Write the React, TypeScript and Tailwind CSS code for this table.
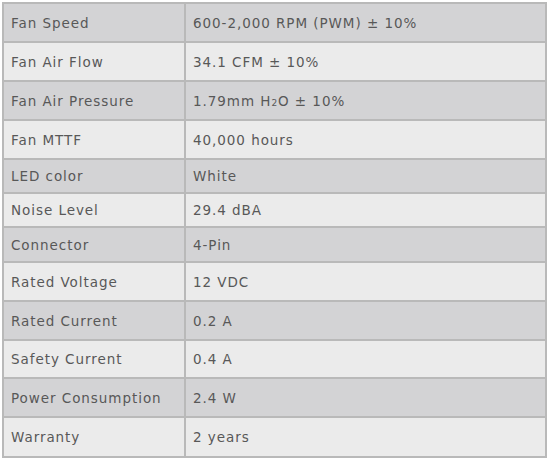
import React from 'react'

const specs: { label: string; value: React.ReactNode; h: string }[] = [
  { label: 'Fan Speed', value: '600-2,000 RPM (PWM) ± 10%', h: 'h-[39px]' },
  { label: 'Fan Air Flow', value: '34.1 CFM ± 10%', h: 'h-[39px]' },
  {
    label: 'Fan Air Pressure',
    value: (
      <>
        1.79mm H<span className="text-[9px]">2</span>O ± 10%
      </>
    ),
    h: 'h-[39px]',
  },
  { label: 'Fan MTTF', value: '40,000 hours', h: 'h-[39px]' },
  { label: 'LED color', value: 'White', h: 'h-[34px]' },
  { label: 'Noise Level', value: '29.4 dBA', h: 'h-[34px]' },
  { label: 'Connector', value: '4-Pin', h: 'h-[35px]' },
  { label: 'Rated Voltage', value: '12 VDC', h: 'h-[39px]' },
  { label: 'Rated Current', value: '0.2 A', h: 'h-[39px]' },
  { label: 'Safety Current', value: '0.4 A', h: 'h-[38px]' },
  { label: 'Power Consumption', value: '2.4 W', h: 'h-[39px]' },
  { label: 'Warranty', value: '2 years', h: 'h-[40px]' },
]

export default function App() {
  return (
    <div className="w-[550px] h-[461px] bg-white pt-[2px] pl-[2px] overflow-hidden">
      <table
        className="w-[545px] border-collapse text-[13.5px] tracking-[0.07em] text-[#585858]"
        style={{ fontFamily: '"DejaVu Sans", Verdana, sans-serif' }}
      >
        <tbody>
          {specs.map((row, i) => (
            <tr key={row.label} className={`${row.h} ${i % 2 === 0 ? 'bg-[#d3d3d5]' : 'bg-[#ebebeb]'}`}>
              <td className="w-[182px] border-2 border-[#b9b9b9] pl-[7px] pt-[1px] align-middle">{row.label}</td>
              <td className="border-2 border-[#b9b9b9] pl-[7px] pt-[1px] align-middle">{row.value}</td>
            </tr>
          ))}
        </tbody>
      </table>
    </div>
  )
}
